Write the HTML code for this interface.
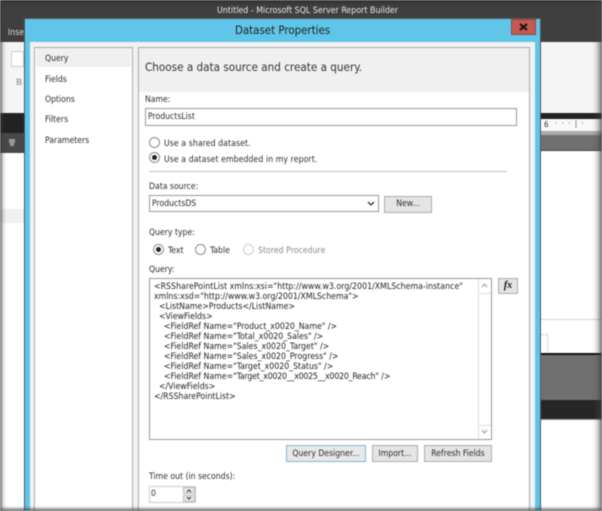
<!DOCTYPE html>
<html><head><meta charset="utf-8"><style>
html,body{margin:0;padding:0;background:#fff}
#s{position:relative;width:602px;height:511px;overflow:hidden;background:#fff;font-family:"DejaVu Sans Condensed","Liberation Sans",sans-serif;font-size:8.6px;color:#2c2c2c;filter:blur(.4px)}
#s div,#s span.a{position:absolute}
.t{white-space:nowrap;line-height:12px}
.box{background:#fff;border:1px solid #ababab;box-sizing:border-box}
.btn{background:#e4e4e4;border:1px solid #adadad;box-sizing:border-box;text-align:center;line-height:16px;height:19px;white-space:nowrap}
.r{width:9px;height:9px;border-radius:50%;border:1px solid #8c8c8c;background:#fff}
.r.on::after{content:"";position:absolute;left:2px;top:2px;width:5px;height:5px;border-radius:50%;background:#222}
#v{left:0;top:0;width:602px;height:511px;box-shadow:inset 3px 0 5px -1px rgba(70,70,70,.6),inset -5px 0 6px -1px rgba(70,70,70,.6),inset 0 -2px 3px 0 rgba(50,50,50,.7),inset 0 2px 3px 0 rgba(30,30,30,.5);z-index:9}
</style></head><body><div id="s">
<!-- background app -->
<div style="left:0;top:0;width:602px;height:42px;background:#3f3f3f"></div>
<div class="t" style="left:217px;top:5px;color:#e8e8e8;font-size:8.8px">Untitled - Microsoft SQL Server Report Builder</div>
<div class="t" style="left:8px;top:27px;color:#ddd;font-size:8.6px">Inse</div>
<div style="left:0;top:42px;width:24px;height:71px;background:#f5f5f5"></div>
<div style="left:11px;top:51px;width:13px;height:16px;background:#fff;border:1px solid #ccc;box-sizing:border-box"></div>
<div class="t" style="left:16px;top:76px;color:#999;font-family:'Liberation Serif',serif;font-weight:bold;font-size:9px">B</div>
<div style="left:0;top:113px;width:24px;height:20px;background:#222"></div>
<div style="left:0;top:133px;width:24px;height:20px;background:#484848"></div>
<div style="left:9px;top:139px;width:6px;height:4px;background:#999"></div>
<div style="left:10px;top:143px;width:4px;height:3px;background:#999"></div>
<div style="left:0;top:209px;width:24px;height:14px;background:#f0f0f0"></div>
<div style="left:541px;top:42px;width:61px;height:71px;background:#f5f5f5"></div>
<div style="left:541px;top:113px;width:61px;height:6px;background:#222"></div>
<div style="left:541px;top:119px;width:61px;height:12px;background:#f8f8f8"></div>
<div class="t" style="left:544px;top:119px;color:#333;font-size:8px">6</div>
<div class="t" style="left:555px;top:118px;color:#555;font-size:8px;letter-spacing:1px">·  ·  ·  |  ·</div>
<div style="left:541px;top:131px;width:61px;height:4px;background:#aaa"></div>
<div style="left:541px;top:135px;width:61px;height:15px;background:#707070"></div>
<div style="left:541px;top:150px;width:61px;height:1px;background:#444"></div>
<div style="left:541px;top:319px;width:61px;height:1px;border-top:1px dotted #aaa"></div>
<div style="left:541px;top:334px;width:6px;height:18px;border:1px dotted #bbb;border-left:0"></div>
<div style="left:541px;top:353px;width:61px;height:2px;background:#111"></div>
<div style="left:541px;top:355px;width:61px;height:45px;background:#707070"></div>
<div style="left:541px;top:400px;width:61px;height:19px;background:#262626"></div>
<div style="left:541px;top:419px;width:61px;height:1px;background:#999"></div>
<!-- dialog -->
<div style="left:24px;top:18px;width:517px;height:493px;background:#5fc6ea;border:1px solid #555;border-bottom:0;box-sizing:border-box"></div>
<div style="left:30px;top:42px;width:505px;height:469px;background:#f2f2f2"></div>
<div class="t" style="left:235px;top:23px;color:#222;font-size:11.4px;line-height:15px">Dataset Properties</div>
<div style="left:511px;top:19px;width:25px;height:16px;background:#c7584f;border:1px solid #8c4a44;box-sizing:border-box"></div>
<svg style="position:absolute;left:519px;top:23px" width="9" height="8" viewBox="0 0 9 8"><path d="M1 1 L8 7 M8 1 L1 7" stroke="#111" stroke-width="2"/></svg>
<!-- left nav -->
<div style="left:34px;top:47px;width:99px;height:464px;background:#fff;border:1px solid #a8a8a8;box-sizing:border-box;border-bottom:0"></div>
<div style="left:36px;top:48px;width:95px;height:19px;background:#f0f0f0"></div>
<div class="t" style="left:45px;top:53px">Query</div>
<div class="t" style="left:45px;top:74px">Fields</div>
<div class="t" style="left:45px;top:94px">Options</div>
<div class="t" style="left:45px;top:114px">Filters</div>
<div class="t" style="left:45px;top:135px">Parameters</div>
<!-- right panel -->
<div style="left:138px;top:47px;width:392px;height:464px;background:#fff;border:1px solid #a8a8a8;box-sizing:border-box;border-bottom:0"></div>
<div style="left:139px;top:48px;width:390px;height:44px;background:#f0f0f0"></div>
<div class="t" style="left:145px;top:60px;color:#333;font-size:11.6px;line-height:14px">Choose a data source and create a query.</div>
<div class="t" style="left:145px;top:94px">Name:</div>
<div class="box" style="left:145px;top:108px;width:372px;height:18px;border-color:#999"></div>
<div class="t" style="left:148px;top:111px">ProductsList</div>
<div class="r" style="left:149px;top:137px"></div>
<div class="t" style="left:164px;top:138px;letter-spacing:.1px">Use a shared dataset.</div>
<div class="r on" style="left:149px;top:152px"></div>
<div class="t" style="left:164px;top:154px;letter-spacing:.1px">Use a dataset embedded in my report.</div>
<div style="left:149px;top:171px;width:358px;height:1px;background:#c4c4c4"></div>
<div class="t" style="left:149px;top:181px">Data source:</div>
<div class="box" style="left:149px;top:195px;width:230px;height:17px;border-color:#999"></div>
<div class="t" style="left:152px;top:198px">ProductsDS</div>
<svg style="position:absolute;left:367px;top:201px" width="8" height="6" viewBox="0 0 8 6"><path d="M1 1 L4 4 L7 1" stroke="#333" stroke-width="1.3" fill="none"/></svg>
<div class="btn" style="left:384px;top:196px;width:48px;height:17px;line-height:15px">New...</div>
<div class="t" style="left:149px;top:227px">Query type:</div>
<div class="r on" style="left:153px;top:244px"></div>
<div class="t" style="left:168px;top:245px">Text</div>
<div class="r" style="left:195px;top:244px"></div>
<div class="t" style="left:210px;top:245px">Table</div>
<div class="r" style="left:243px;top:244px;border-color:#ccc"></div>
<div class="t" style="left:258px;top:245px;color:#888;letter-spacing:.05px">Stored Procedure</div>
<div class="t" style="left:149px;top:264px">Query:</div>
<div class="box" style="left:149px;top:278px;width:343px;height:162px;border-color:#999"></div>
<div style="left:478px;top:279px;width:12px;height:160px;background:#fff;border-left:1px solid #ddd"></div>
<div style="left:478px;top:279px;width:13px;height:14px;border-bottom:1px solid #ddd"></div>
<div style="left:478px;top:425px;width:13px;height:14px;border-top:1px solid #ddd"></div>
<svg style="position:absolute;left:481px;top:283px" width="7" height="5" viewBox="0 0 7 5"><path d="M1 4 L3.5 1 L6 4" stroke="#999" fill="none"/></svg>
<svg style="position:absolute;left:481px;top:429px" width="7" height="5" viewBox="0 0 7 5"><path d="M1 1 L3.5 4 L6 1" stroke="#999" fill="none"/></svg>
<div class="t" style="left:154px;top:282px;font-size:8.7px;line-height:10px;white-space:pre;color:#222"><span style="letter-spacing:.04px">&lt;RSSharePointList xmlns:xsi="http://www.w3.org/2001/XMLSchema-instance"</span>
xmlns:xsd="http://www.w3.org/2001/XMLSchema"&gt;
  &lt;ListName&gt;Products&lt;/ListName&gt;
  &lt;ViewFields&gt;
    &lt;FieldRef Name="Product_x0020_Name" /&gt;
    &lt;FieldRef Name="Total_x0020_Sales" /&gt;
    &lt;FieldRef Name="Sales_x0020_Target" /&gt;
    &lt;FieldRef Name="Sales_x0020_Progress" /&gt;
    &lt;FieldRef Name="Target_x0020_Status" /&gt;
    &lt;FieldRef Name="<span style="letter-spacing:-.2px">Target_x0020__x0025__x0020_Reach</span>" /&gt;
  &lt;/ViewFields&gt;
&lt;/RSSharePointList&gt;</div>
<div class="btn" style="left:498px;top:278px;width:20px;height:16px;line-height:14px;font-family:'Liberation Serif',serif;font-style:italic;font-weight:bold;font-size:10px;color:#111">fx</div>
<div class="btn" style="left:286px;top:445px;width:80px;background:#e8e8e8;border-color:#7eb4d8;line-height:16px;height:17px">Query Designer...</div>
<div class="btn" style="left:372px;top:445px;width:46px;height:17px;line-height:16px">Import...</div>
<div class="btn" style="left:424px;top:445px;width:68px;height:17px;line-height:16px">Refresh Fields</div>
<div class="t" style="left:149px;top:471px">Time out (in seconds):</div>
<div class="box" style="left:149px;top:486px;width:47px;height:17px;border-color:#ccc"></div>
<div class="t" style="left:151px;top:488px">0</div>
<div style="left:183px;top:487px;width:12px;height:7px;background:#e6e6e6;border:1px solid #bbb;box-sizing:border-box"></div>
<div style="left:183px;top:495px;width:12px;height:7px;background:#e6e6e6;border:1px solid #bbb;box-sizing:border-box"></div>
<svg style="position:absolute;left:186px;top:488px" width="6" height="14" viewBox="0 0 6 14"><path d="M1 4 L3 2 L5 4 M1 9 L3 11 L5 9" stroke="#333" fill="none"/></svg>
<div id="v"></div>
</div></body></html>
